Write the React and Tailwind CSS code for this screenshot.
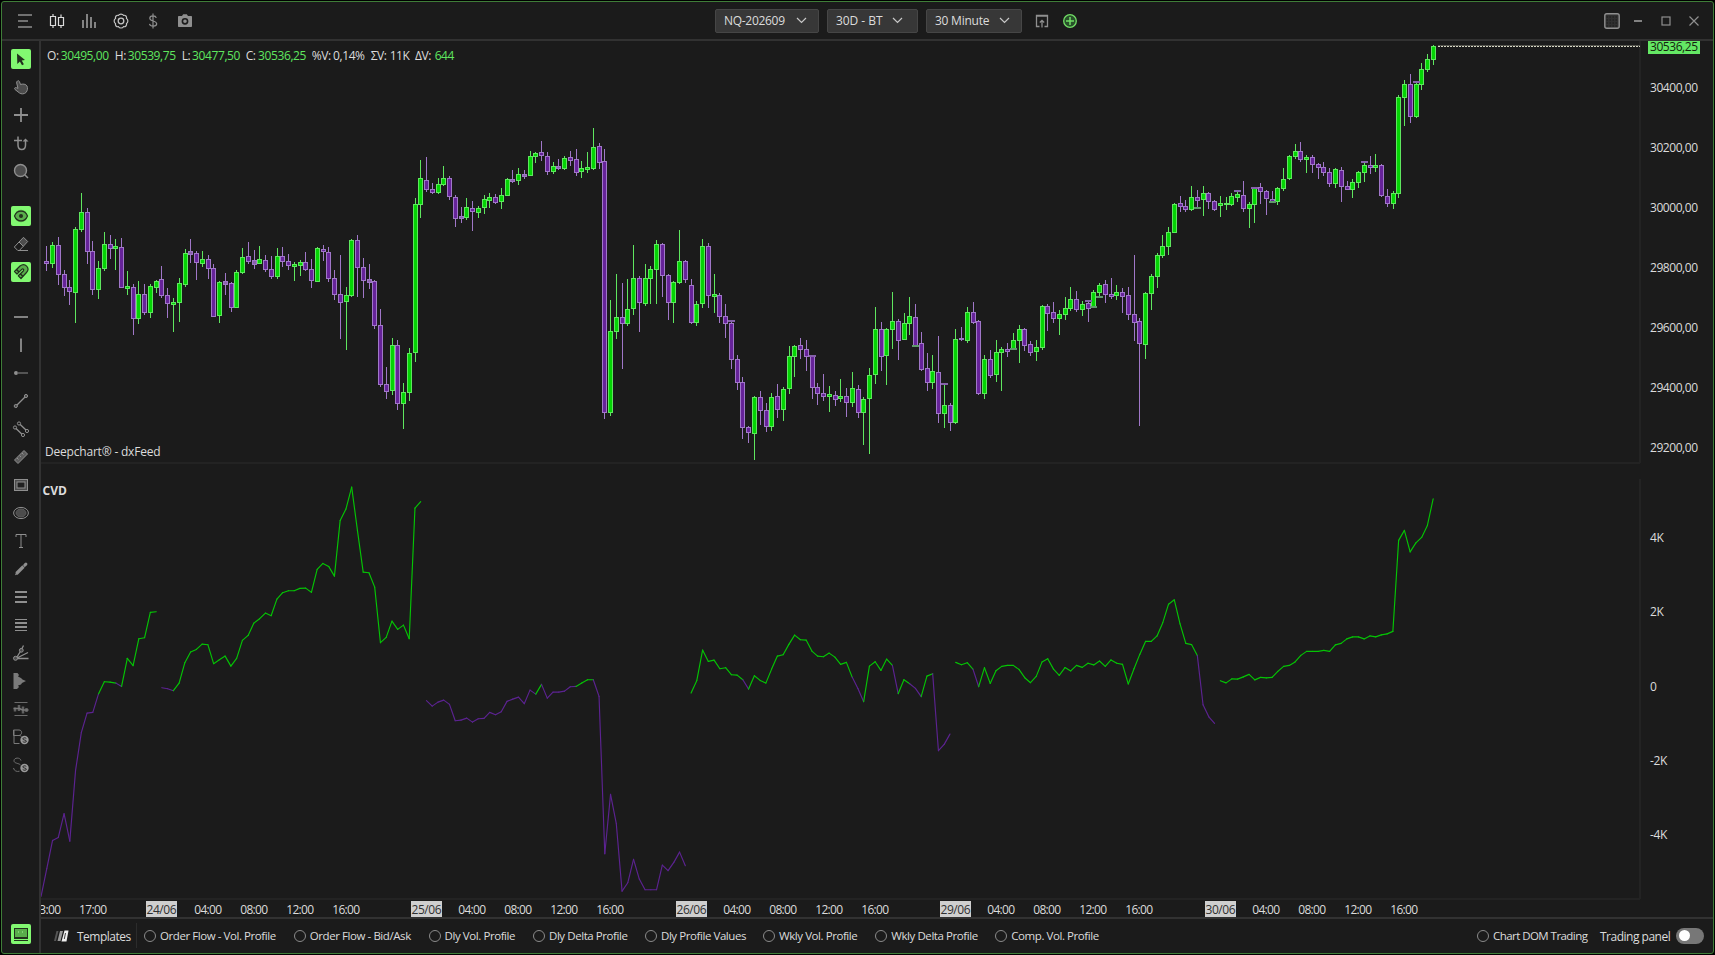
import React from 'react'
import { clsx } from "clsx";

// one row per 30 minute bar: high, body top, body bottom, low (chart rows), 1 = up / 0 = down
const BARS = [
  [246,261,264,271,0],[242,245,264,268,1],[237,245,275,285,0],[270,274,288,296,0],[280,287,292,305,0],[227,229,293,323,1],
  [193,212,230,232,1],[208,212,252,264,0],[241,251,290,295,0],[261,268,290,299,1],[232,244,269,271,1],[235,244,249,259,0],
  [239,246,249,270,1],[238,247,288,288,0],[271,286,289,295,1],[284,287,319,335,0],[281,294,319,324,1],[284,294,313,315,0],
  [284,286,313,318,1],[280,281,288,293,1],[266,279,296,298,0],[288,295,304,318,0],[298,302,305,332,1],[278,283,303,322,1],
  [249,253,285,287,1],[239,251,255,263,0],[251,253,263,280,0],[251,259,264,267,1],[255,259,269,279,0],[264,268,317,317,0],
  [281,282,316,323,1],[273,281,285,295,0],[282,283,308,312,0],[270,272,308,308,1],[248,257,273,274,1],[242,256,262,264,0],
  [250,260,265,269,0],[246,259,264,264,1],[255,260,270,272,0],[256,269,277,279,0],[248,256,277,279,1],[247,256,262,267,0],
  [254,261,266,270,0],[262,264,267,281,1],[260,262,266,276,1],[252,262,270,271,0],[259,269,281,288,0],[247,248,282,282,1],
  [245,249,252,261,0],[247,252,279,282,0],[270,278,295,300,0],[255,294,303,339,0],[287,295,302,350,1],[239,240,296,297,1],
  [235,240,268,297,0],[258,267,281,298,0],[264,279,283,289,0],[280,281,326,329,0],[309,325,385,387,0],[367,384,392,399,0],
  [338,345,391,395,1],[340,345,404,410,0],[383,392,404,429,1],[348,353,393,401,1],[198,204,353,362,1],[160,178,205,218,1],
  [157,180,190,192,0],[183,189,193,194,0],[178,184,193,194,1],[166,178,185,186,1],[176,178,197,200,0],[195,197,219,227,0],
  [207,216,219,223,0],[198,207,218,220,1],[201,208,212,231,0],[206,208,213,218,1],[195,199,208,214,1],[193,197,201,208,1],
  [194,197,203,204,0],[188,195,202,209,1],[178,179,196,196,1],[170,179,182,183,0],[168,174,181,185,1],[170,174,177,179,0],
  [151,156,176,176,1],[152,153,157,163,1],[141,152,156,161,0],[152,156,172,175,0],[162,166,172,174,1],[159,166,169,170,0],
  [156,158,169,170,1],[151,157,161,166,0],[149,159,173,176,0],[161,168,172,178,1],[152,167,170,173,1],[128,147,169,170,1],
  [143,146,163,169,0],[149,161,413,419,0],[300,331,413,416,1],[274,317,332,339,1],[283,317,324,369,0],[279,309,324,326,1],
  [245,278,309,315,1],[276,278,303,332,0],[264,278,304,306,1],[266,269,279,304,1],[240,244,270,304,1],[243,244,276,297,0],
  [274,275,303,320,0],[281,282,303,323,1],[230,261,283,284,1],[260,261,280,283,0],[279,285,323,324,0],[301,304,323,326,1],
  [239,246,304,308,1],[243,246,296,308,0],[274,294,297,313,1],[293,295,317,323,0],[304,316,324,338,0],[322,323,360,369,0],
  [355,359,383,390,0],[377,382,428,439,0],[426,427,433,443,0],[396,397,434,460,1],[391,397,411,425,0],[403,410,427,432,0],
  [393,397,427,431,1],[384,396,410,418,0],[387,389,410,421,1],[346,356,389,394,1],[345,346,357,377,1],[338,345,350,359,0],
  [340,349,357,371,0],[355,356,388,399,0],[383,387,394,405,0],[374,393,397,401,0],[386,394,397,412,1],[391,395,400,406,0],
  [379,396,399,402,1],[388,396,403,417,0],[372,388,403,407,1],[385,389,413,418,0],[397,399,413,445,1],[368,375,399,454,1],
  [307,329,375,384,1],[322,329,357,371,0],[328,329,356,385,1],[292,321,330,349,1],[319,321,341,360,0],[313,323,340,340,1],
  [297,316,324,335,1],[304,317,346,346,0],[332,343,370,371,0],[353,368,383,391,0],[355,371,383,389,1],[336,372,414,423,0],
  [384,405,414,428,1],[403,405,423,431,0],[329,339,423,424,1],[327,338,340,341,0],[307,312,341,343,1],[302,312,323,324,0],
  [320,321,394,395,0],[355,359,394,399,1],[350,359,376,378,0],[340,352,375,382,1],[347,349,353,391,1],[343,349,352,357,0],
  [333,340,350,350,1],[325,329,341,363,1],[328,329,346,351,0],[341,344,353,356,0],[340,347,352,361,1],[305,306,348,350,1],
  [304,306,314,331,0],[302,312,319,323,0],[310,314,319,335,1],[297,308,315,320,1],[287,299,309,311,1],[291,299,310,312,0],
  [301,304,310,316,1],[301,303,309,322,0],[290,292,307,307,1],[283,285,293,296,1],[280,284,295,303,0],[278,294,297,299,0],
  [285,292,296,300,1],[288,292,297,313,0],[287,295,315,320,0],[255,314,323,341,0],[318,321,344,426,0],[292,293,345,359,1],
  [274,276,294,310,1],[253,255,277,288,1],[235,246,256,258,1],[227,232,247,255,1],[203,204,233,233,1],[196,203,207,212,0],
  [200,206,210,212,0],[186,197,210,211,1],[190,197,201,208,0],[186,193,200,216,1],[192,193,202,209,0],[200,201,210,211,0],
  [196,203,206,217,1],[197,203,205,210,1],[193,196,205,206,1],[191,194,198,202,1],[181,195,209,212,0],[202,204,209,228,1],
  [187,188,205,223,1],[183,187,192,204,0],[190,191,199,215,0],[191,199,202,202,0],[187,188,202,205,1],[168,179,189,191,1],
  [155,156,179,180,1],[144,151,157,159,1],[142,151,160,162,0],[155,157,160,173,1],[155,157,165,173,0],[163,164,168,179,0],
  [162,167,173,176,0],[168,172,184,187,0],[168,169,184,188,1],[167,170,187,202,0],[181,186,190,190,0],[179,182,190,198,1],
  [171,172,183,188,1],[163,165,173,182,1],[156,165,168,174,0],[154,165,168,172,1],[164,165,196,197,0],[189,196,204,207,0],
  [191,193,204,209,1],[95,97,194,198,1],[80,84,98,126,1],[74,84,117,123,0],[83,84,117,118,1],[63,69,85,90,1],
  [54,59,70,72,1],[45,46,60,65,1],
];

// bar index, row, 1 = green / 0 = purple
const MARKERS = [
  [119,320,0],[133,355,0],[151,345,1],[156,383,0],[168,348,1],[181,300,0],[182,306,1],[183,296,1],
  [200,207,1],[207,190,0],[210,187,0],[213,201,1],[229,161,0],[238,81,0],
];

const DIMMED = [25, 31, 36, 56, 72, 81, 83, 89, 159];

// cumulative delta restarts with every session
const SESSIONS = [
  { start: -1, rows: [896,868.3,840,837,813.3,840.7,770,732.3,712.7,712,693.3,681.3,681.7,682.7,686,658,665.3,638.3,637.3,612,611.3] },
  { start: 20, rows: [687.3,688.3,690.3,682.7,662.3,651.7,649,643.7,644.3,663.3,659.3,655.7,665.7,658,640,635,622.7,618.3,612.7,615.3,598.7,592.3,590.3,590.3,588,587.7,592,569,563,566,575.7,520,508.7,486.7,530,571.7,572.3,586.7,642.3,637,620.7,629,624.7,638.3,507.7,501.3] },
  { start: 66, rows: [700.3,705.7,701.7,699.7,704,720.3,719.7,717.7,721.7,718.3,718,712,714.3,711.3,701,698.7,696.7,703.3,689.7,693.7,684,697.7,691.7,691.7,690.7,686.3,686,682.7,679.3,679.3,696,853.3,794,823.3,890.7,882.3,859,878.7,889.3,889.3,889.3,864.7,870.3,862,851.7,865.3] },
  { start: 112, rows: [692.7,680,649.7,661,659.7,668.3,667.3,674.3,674.7,679.3,688.7,675.3,680,682.7,668.7,655.7,654.3,644,634.7,639.3,639.7,650.7,655.7,656.3,652.7,656.7,664,662,676.7,688,701.3,665.7,661.3,670,658.7,665,693.3,679.3,683.3,688,696.3,675.7,673.3,750.3,744,733.7] },
  { start: 158, rows: [662,664.3,662.3,668.7,686.3,667.3,683,670.3,666,665,665,669,677.3,682.3,676,661.7,658.3,668.7,675,667.2,670.5,665,667,662.8,664.5,660.6,666,659.5,662.8,664,683.6,668.3,654,641,641,635.5,622.3,603.8,599.4,623.4,643,644.2,655,704.4,716.4,723] },
  { start: 204, rows: [680.3,682.5,678.5,678.7,676.5,674,679.5,677,677.5,677,671,666,665,661.5,655,651,651,651,650,651,644.5,643,638.5,636.5,636.5,638.5,635.5,636.5,634.5,633.5,631,540,530,551.5,542.5,537,525,498.5] },
];

const ZERO_ROW = 685.8;
const DAYS = [[20, "24/06"], [66, "25/06"], [112, "26/06"], [158, "29/06"], [204, "30/06"]];
const HOURS = [[8, "04:00"], [16, "08:00"], [24, "12:00"], [32, "16:00"]];
const PRICES = ["30400,00", "30200,00", "30000,00", "29800,00", "29600,00", "29400,00", "29200,00"];
const DELTAS = [[542, "4K"], [616, "2K"], [691, "0"], [765, "-2K"], [839, "-4K"]];

const barX = (i) => Math.floor(46.943 + 5.7525 * i);
const lineX = (i) => 46.8 + 5.7525 * i;

function Candle({ bar, index }) {
  const [high, top, bottom, low, up] = bar;
  const x = barX(index);
  const edge = up ? "#5fe65f" : "#a077c8";
  let fill = up ? "#04d404" : "#662399";
  if (DIMMED.includes(index)) fill = "#8a62ab";

  return (
    <g shapeRendering="crispEdges">
      <rect x={x} y={high} width="1" height={low - high} fill={edge} />
      <rect x={x - 2} y={top} width="5" height={bottom - top} fill={edge} />
      {bottom - top > 2 && (
        <rect x={x - 1} y={top + 1} width="3" height={bottom - top - 2} fill={fill} />
      )}
    </g>
  );
}

function PricePanel() {
  return (
    <svg className="block h-[437px] w-[1670px]" viewBox="41 41 1670 437">
      <path d="M41 463H1640M1640 41V463" stroke="#232323" strokeWidth="2" fill="none" />
      {BARS.map((bar, i) => (
        <Candle key={i} bar={bar} index={i} />
      ))}
      {MARKERS.map(([i, row, up]) => (
        <rect key={i} x={barX(i) - 3} y={row} width="7" height="2" fill={up ? "#5f9a6c" : "#8662aa"} />
      ))}
      <path d="M1438 45.5H1640" stroke="#55554e" />
      <path d="M1438 46.5H1640" stroke="#d6d6c4" strokeDasharray="2 1" />
      <rect x="1648" y="41" width="52" height="13" fill="#64e764" />
      <text x="1650" y="51" textLength="48" fill="#14240f">30536,25</text>
      {PRICES.map((price, i) => (
        <text key={price} x="1650" y={92 + i * 60} textLength="48" fill="#dcdcdc">{price}</text>
      ))}
    </svg>
  );
}

function DeltaPanel() {
  return (
    <svg className="block h-[439px] w-[1670px]" viewBox="41 478 1670 439">
      <path d="M1640 479V899M41 899H1640" stroke="#232323" strokeWidth="2" fill="none" />
      {SESSIONS.map(({ start, rows }) =>
        rows.slice(1).map((row, i) => (
          <line
            key={start + i}
            x1={lineX(start + i)}
            y1={rows[i] + 0.4}
            x2={lineX(start + i + 1)}
            y2={row + 0.4}
            stroke={row < ZERO_ROW ? "#05c405" : "#5c2391"}
            strokeWidth="1.15"
            strokeLinecap="round"
          />
        ))
      )}
      <text x="42.5" y="494.5" textLength="24.5" fontWeight="700" fill="#dcdcdc">CVD</text>
      {DELTAS.map(([y, label]) => (
        <text key={label} x="1650" y={y} letterSpacing="-0.3" fill="#dcdcdc">{label}</text>
      ))}
      <text x="33" y="914" textLength="28" fill="#dcdcdc">13:00</text>
      <text x="79" y="914" textLength="28" fill="#dcdcdc">17:00</text>
      {DAYS.map(([i, day]) => (
        <g key={day}>
          <rect x={barX(i) - 15} y="901" width="31" height="16" fill="#cfcfcf" />
          <text x={barX(i) - 14.5} y="914" textLength="30" fill="#303030">{day}</text>
          {HOURS.map(([offset, hour]) => (
            <text key={hour} x={barX(i + offset) - 13.8} y="914" textLength="28" fill="#dcdcdc">{hour}</text>
          ))}
        </g>
      ))}
    </svg>
  );
}

function Icon({ children, className, size = 20 }) {
  return (
    <svg
      width={size}
      height={size}
      viewBox="0 0 20 20"
      fill="none"
      stroke="currentColor"
      className={clsx("shrink-0", className)}
    >
      {children}
    </svg>
  );
}

const DollarBadge = () => (
  <>
    <circle cx="13.5" cy="13" r="4.2" fill="#9a9a9a" stroke="none" />
    <path d="M15.300 11.500c-.7-1-3.500-.9-3.500.4 0 1.500 3.600.8 3.600 2.300 0 1.400-3 1.300-3.700.2" stroke="#222" strokeWidth="1" />
  </>
);

const TOOLS_A = [
  { active: true, art: <path d="M6 4.500l8 6.500-3.300.4 2.200 3.900-1.900 1-2.100-3.900L6.300 15z" fill="#22301d" stroke="none" /> },
  { art: <path d="M6.500 4c1-.8 1.700 0 2 .8l1 2.700c2-.8 5.500-.6 6.500 1.500.900 2 .6 4.500-1 6.500-2 1.800-5 1.700-6.500.5L4 12.500c-1-1.300 0-2.300 1.400-1.800l1.600.7L5.700 6C5.500 5 5.800 4.500 6.500 4z" fill="#4c4c4c" /> },
  { art: <path d="M10 3v14M3 10h14" strokeWidth="1.800" /> },
  { art: <><path d="M3 7.500h8M7 3.500V12c0 6 7.500 6 7.500 0V7" strokeWidth="1.500" /><path d="M11.500 8.500l3-3 3 3z" fill="currentColor" stroke="none" /></> },
  { art: <><circle cx="9.500" cy="9.500" r="6" fill="#4c4c4c" strokeWidth="1.400" /><path d="M14 14l3 3" strokeWidth="1.500" /></> },
];

const TOOLS_B = [
  { active: true, art: <><circle cx="10" cy="10" r="6.200" fill="#59ad4b" stroke="none" /><path d="M3.500 10c2.500-6.500 10.500-6.500 13 0-2.500 6.500-10.500 6.500-13 0z" stroke="#22301d" strokeWidth="1.200" /><circle cx="10" cy="10" r="2" fill="#22301d" stroke="none" /></> },
  { art: <><path d="M8 8L12.500 3.300l4.200 4.200L12.300 12.300z" fill="#4c4c4c" /><path d="M8 8l4.300 4.300-4 4.200H6.800L3.300 13zM7 16.500h10" /></> },
  { active: true, art: <g stroke="#22301d" strokeLinejoin="round"><path d="M3.500 9.500L9 4c5-4 10.500 2 6.500 6.500L10 16.500l-2.700-2.700L12.500 8.700c.8-1-.6-2.400-1.500-1.500L6 12z" fill="#59ad4b" strokeWidth="1.200" /><path d="M5.500 7.500l2.500 2.500M12 14.500l-2.700-2.700" strokeWidth="1.500" /></g> },
];

const TOOLS_C = [
  <path d="M3 10h14" strokeWidth="1.800" />,
  <path d="M10 3.500v13.500" strokeWidth="1.800" />,
  <><circle cx="5" cy="10" r="2" fill="currentColor" stroke="none" /><path d="M6 10h11" stroke="#686868" strokeWidth="1.500" /></>,
  <><path d="M6 14l8-8" strokeWidth="1.200" /><circle cx="4.800" cy="15" r="1.600" fill="#4c4c4c" /><circle cx="15" cy="5" r="1.600" fill="#4c4c4c" /></>,
  <><path d="M9.200 5.500l5.800 5.500M5 9.500l6 5.700" strokeWidth="1.300" /><circle cx="8" cy="4.500" r="1.600" /><circle cx="16" cy="12" r="1.600" /><circle cx="4" cy="8.500" r="1.600" /><circle cx="12" cy="16" r="1.600" /></>,
  <path d="M3.500 13L13 3.500 16.500 7 7 16.500zM6 11l1.500 1.500M8.500 8.500L10 10M11 6l1.500 1.500" fill="#5c5c5c" />,
  <><rect x="3.500" y="4.500" width="13" height="11" fill="#4c4c4c" /><rect x="6" y="7" width="8" height="6" fill="#202020" /></>,
  <><ellipse cx="10" cy="10" rx="7.400" ry="5.600" /><ellipse cx="10" cy="10" rx="5" ry="4" fill="#4c4c4c" stroke="#5c5c5c" /></>,
  <path d="M5 6V3.500h10V6M10 3.500v13M8 16.500h4" />,
  <><path d="M5.500 14.500l7-7" strokeWidth="3.200" /><path d="M13.700 6.300l1.200-1.200" strokeWidth="3" strokeLinecap="round" /><path d="M4 16.300l1-3 2 2z" fill="currentColor" stroke="none" /></>,
  <path d="M4 5h12M4 10h12M4 15h12" strokeWidth="2" />,
  <><path d="M4 4.500h12M4 15.500h12" /><path d="M4 8h12M4 12h12" strokeWidth="2" /></>,
  <><path d="M5 15.500h12.500M5 15.500l12-6M5 15.500l5-8 2.500-5" strokeWidth="1.300" /><circle cx="4.500" cy="15.300" r="2" fill="#4c4c4c" /><circle cx="10.300" cy="7.300" r="1.900" fill="#4c4c4c" /></>,
  <path d="M2.500 2h4l1.500 2-1 1.500 3 1.500 1.500 1.500L15 10l-4 2-1 1.500-3 1 1 1.500-2 2H2.500z" fill="#7a7a7a" stroke="none" />,
  <><path d="M3.500 3.500h13M3.500 16.500h13" stroke="#6a6a6a" /><path d="M4 8.500v4M8 6v6M12 7.500v7M15.500 9v4" stroke="#606060" strokeWidth="2.500" /><path d="M2.500 9.500h6l3 1.500h6" stroke="#7a7a7a" strokeWidth="1.500" /></>,
  <><path d="M2.500 3h5.500c3.500 0 3.500 5 0 5.500H2.500zM3 3V16.500h5.500M8 8.500c1.500 0 2 .5 2.500 1.200" stroke="#7a7a7a" /><DollarBadge /></>,
  <><path d="M10 5.500C9 2 3 2.500 3 5.700c0 3 5 2.300 6.500 4.300M2.500 13c.5 3 3.500 4 6 3.200" stroke="#707070" /><DollarBadge /></>,
];

function ToolButton({ active, children }) {
  return (
    <button
      className={clsx(
        "flex h-5 w-5 shrink-0 items-center justify-center rounded-[2px]",
        active ? "bg-[#82f871] text-[#22301d]" : "text-[#8f8f8f]"
      )}
    >
      <Icon>{children}</Icon>
    </button>
  );
}

function SideBar() {
  return (
    <aside className="flex w-[39px] shrink-0 flex-col items-start border-r-2 border-[#323232] pt-2 pl-[9px]">
      <div className="flex flex-col gap-2">
        {TOOLS_A.map((tool, i) => (
          <ToolButton key={i} active={tool.active}>{tool.art}</ToolButton>
        ))}
      </div>
      <div className="mt-[25px] flex flex-col gap-2">
        {TOOLS_B.map((tool, i) => (
          <ToolButton key={i} active={tool.active}>{tool.art}</ToolButton>
        ))}
      </div>
      <div className="mt-[25px] flex flex-col gap-2">
        {TOOLS_C.map((art, i) => (
          <ToolButton key={i}>{art}</ToolButton>
        ))}
      </div>
      <div className="mt-auto mb-[9px]">
        <ToolButton active>
          <rect x="3.500" y="4.500" width="13" height="9" fill="#59ad4b" stroke="#22301d" />
          <path d="M3 16.500h14M3 14.500h14" stroke="#22301d" />
          <path d="M7 8h1M11 8h1" stroke="#a6f59a" />
        </ToolButton>
      </div>
    </aside>
  );
}

function Select({ label, className, textClass }) {
  return (
    <button
      className={clsx(
        "flex h-6 items-center justify-between rounded-[2px] border border-[#464646] bg-[#373737] pl-2 text-[#dcdcdc]",
        className
      )}
    >
      <span className={clsx("whitespace-nowrap", textClass)}>{label}</span>
      <svg width="11" height="7" viewBox="0 0 11 7" fill="none" stroke="#c8c8c8" strokeWidth="1.200">
        <path d="M1 1l4.500 4.500L10 1" />
      </svg>
    </button>
  );
}

function TopBar() {
  return (
    <header className="flex h-[39px] shrink-0 items-center border-b-2 border-[#323232] text-[#8f8f8f]">
      <div className="flex w-[713px] items-center gap-3 pl-[13px]">
        <Icon><path d="M3 4h14M3 10h10M3 16h14" strokeWidth="1.300" /></Icon>
        <Icon className="text-[#dcdcdc]">
          <path d="M3.500 5.500h5v9h-5zM6 3v2.500M6 14.500v2.500M11.500 6.500h5v8h-5zM14 3.500v3M14 14.500v2.500" strokeWidth="1.200" />
        </Icon>
        <Icon><path d="M4 17V9M8 17V3M12 17V6M16 17v-6" strokeWidth="1.800" /></Icon>
        <Icon className="text-[#c4c4c4]">
          <path d="M7.500 4.300C8.500 2.600 11.500 2.600 12.500 4.300 14.500 3.900 16 5.500 15.500 7.500 17.300 8.500 17.300 11.500 15.500 12.500 16 14.500 14.500 16.100 12.500 15.700 11.500 17.400 8.500 17.400 7.500 15.700 5.500 16.100 4 14.500 4.500 12.500 2.700 11.500 2.700 8.500 4.500 7.500 4 5.500 5.500 3.900 7.500 4.300z" strokeWidth="1.200" />
          <circle cx="10" cy="10" r="2.800" strokeWidth="1.300" />
        </Icon>
        <Icon>
          <path d="M13.300 6.800C12.500 4 6.800 4.200 6.800 7.200c0 3.300 6.900 2.300 6.900 5.600 0 3-6.500 3.200-7.200 0M10 2.500v15" strokeWidth="1.200" />
        </Icon>
        <Icon>
          <path d="M4 5h3l1.200-1.800h3.600L13 5h3c.7 0 1 .4 1 1v9c0 .6-.4 1-1 1H4c-.6 0-1-.4-1-1V6c0-.6.4-1 1-1z" fill="currentColor" stroke="none" />
          <circle cx="10" cy="10.300" r="2.600" stroke="#1b1b1b" strokeWidth="1.600" />
        </Icon>
      </div>
      <div className="flex items-center gap-2">
        <Select label="NQ-202609" className="w-[104px] pr-[11px]" textClass="tracking-[-0.3px]" />
        <Select label="30D - BT" className="w-[91px] pr-[14px]" textClass="tracking-[-0.05px]" />
        <Select label="30 Minute" className="w-[96px] pr-[11px]" textClass="tracking-[-0.25px]" />
        <div className="ml-0.5 flex items-center gap-2">
          <Icon><path d="M7.500 15.500H4.500V4.500h11v11h-3M4 5h12M10 16.500V9.500M7.800 11.500l2.200-2.200 2.200 2.200" strokeWidth="1.300" /></Icon>
          <Icon className="text-[#72de66]">
            <circle cx="10" cy="10" r="6.300" fill="#28502a" strokeWidth="1.300" />
            <path d="M10 6v8M6 10h8" strokeWidth="1.500" />
          </Icon>
        </div>
      </div>
      <div className="ml-auto flex items-center gap-2 pr-[9px]">
        <Icon className="mr-[-2px]">
          <rect x="2.800" y="2.800" width="14.400" height="14.400" rx="2" fill="#303030" strokeWidth="1.400" />
          <path d="M4.500 6h11M4.500 9h11M4.500 12h11M4.500 15h11" stroke="#1b1b1b" strokeDasharray="1.500 1.500" />
        </Icon>
        <Icon><path d="M6 10h8" strokeWidth="1.800" /></Icon>
        <Icon><rect x="6" y="6" width="8" height="8" strokeWidth="1.200" /></Icon>
        <Icon><path d="M5.500 5.500l9 9M14.500 5.500l-9 9" strokeWidth="1.200" /></Icon>
      </div>
    </header>
  );
}

const QUOTES = [
  { label: "O:", value: "30495,00", lw: "w-[13.7px]", vw: "w-[54px]", up: true },
  { label: "H:", value: "30539,75", lw: "w-[13px]", vw: "w-[54px]", up: true },
  { label: "L:", value: "30477,50", lw: "w-[10.3px]", vw: "w-[53.7px]", up: true },
  { label: "C:", value: "30536,25", lw: "w-[12.3px]", vw: "w-[53.7px]", up: true },
  { label: "%V:", value: "0,14%", lw: "w-[21.3px]", vw: "w-[37.7px]", up: false },
  { label: "ΣV:", value: "11K", lw: "w-[19px]", vw: "w-[25.3px]", up: false },
  { label: "ΔV:", value: "644", lw: "w-[19.700px]", vw: "w-[20px]", up: true },
];

function Quotes() {
  return (
    <div className="absolute top-[7px] left-[6px] flex leading-4 tracking-[-0.38px] whitespace-nowrap">
      {QUOTES.map((q) => (
        <React.Fragment key={q.label}>
          <span className={q.lw}>{q.label}</span>
          <span className={clsx(q.vw, q.up && "text-[#5fe65f]")}>{q.value}</span>
        </React.Fragment>
      ))}
    </div>
  );
}

const TEMPLATES = [
  { name: "Order Flow - Vol. Profile", width: "w-[149.800px]" },
  { name: "Order Flow - Bid/Ask", width: "w-[134.800px]" },
  { name: "Dly Vol. Profile", width: "w-[104.400px]" },
  { name: "Dly Delta Profile", width: "w-[112px]" },
  { name: "Dly Profile Values", width: "w-[118px]" },
  { name: "Wkly Vol. Profile", width: "w-[112.300px]" },
  { name: "Wkly Delta Profile", width: "w-[120px]" },
  { name: "Comp. Vol. Profile", width: "w-[120px]" },
];

function Radio({ name, width, textClass = "tracking-[-0.43px]" }) {
  return (
    <label className={clsx("flex shrink-0 items-center gap-1 whitespace-nowrap", width)}>
      <span className="h-3 w-3 shrink-0 rounded-full border border-[#8a8a8a]" />
      <span className={clsx("text-[11.5px]", textClass)}>{name}</span>
    </label>
  );
}

function BottomBar() {
  return (
    <footer className="flex h-[35px] shrink-0 items-center border-t-2 border-[#323232] pl-3">
      <svg width="17" height="12" viewBox="0 0 17 12" className="mt-px shrink-0">
        <path d="M3.500 1L1 11h2L5.500 1z" fill="#555" />
        <path d="M7 1L4.500 11h3L10 1z" fill="#999" />
        <path d="M11.500.5h4L13.500 11.500h-5z" fill="#f0f0f0" />
        <path d="M12.500 3l-1.200 6" stroke="#444" />
      </svg>
      <span className="mt-0.5 ml-[7px] w-[59px] text-[12px] tracking-[-0.5px]">Templates</span>
      <span className="h-[25px] w-px bg-[#2c2c2c]" />
      <div className="ml-[7px] flex">
        {TEMPLATES.map((t) => (
          <Radio key={t.name} {...t} />
        ))}
      </div>
      <div className="ml-auto flex items-center pr-[9px]">
        <Radio name="Chart DOM Trading" width="w-[123px]" textClass="tracking-[-0.55px]" />
        <span className="mt-0.5 w-[76px] text-[12px] tracking-[-0.5px] whitespace-nowrap">Trading panel</span>
        <span className="flex h-4 w-7 items-center rounded-full bg-[#777777] pl-[3px]">
          <span className="h-[11px] w-[11px] rounded-full bg-white" />
        </span>
      </div>
    </footer>
  );
}

function App() {
  return (
    <div className="h-[955px] w-[1715px] overflow-hidden bg-black p-px font-['Open_Sans','Noto_Sans',sans-serif] text-[12px] text-[#dcdcdc]">
      <div className="flex h-[953px] w-[1713px] flex-col rounded-[3px] border border-[#3f7d38] bg-[#1b1b1b]">
        <TopBar />
        <div className="flex min-h-0 flex-1">
          <SideBar />
          <main className="flex min-w-0 flex-1 flex-col">
            <section className="relative">
              <PricePanel />
              <Quotes />
              <p className="absolute top-[403px] left-[4px] leading-4 tracking-[-0.2px]">Deepchart® - dxFeed</p>
            </section>
            <section>
              <DeltaPanel />
            </section>
            <BottomBar />
          </main>
        </div>
      </div>
    </div>
  );
}

export default App;
